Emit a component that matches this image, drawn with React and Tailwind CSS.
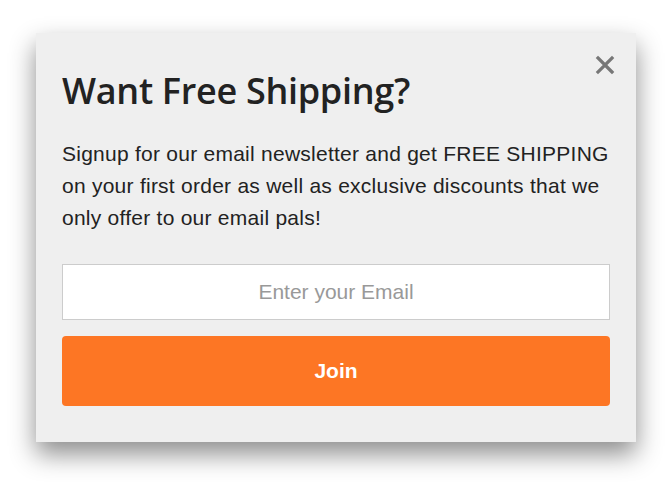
export default function App() {
  return (
    <div className="w-[672px] h-[482px] bg-white pt-[33px] pl-[36px]">
      <div className="relative w-[600px] h-[409px] bg-[#efefef] px-[26px] pt-[35px] shadow-[0_12px_24px_rgba(0,0,0,0.45)]">
        <button className="absolute right-[21px] top-[22px] text-[#777]">
          <svg width="20" height="20" viewBox="0 0 20 20" fill="none" stroke="currentColor" strokeWidth="3.2" strokeLinecap="square">
            <path d="M3 3L17 17M17 3L3 17" />
          </svg>
        </button>
        <h1 className="font-['Open_Sans',sans-serif] font-semibold text-[36px] leading-[46px] text-[#222] tracking-[-0.3px]">
          Want Free Shipping?
        </h1>
        <p className="mt-[24px] font-['Liberation_Sans',Arial,sans-serif] text-[21px] tracking-[0.25px] leading-[32px] text-[#222]">
          Signup for our email newsletter and get FREE SHIPPING on your first order as well as exclusive discounts that we only offer to our email pals!
        </p>
        <input
          type="text"
          placeholder="Enter your Email"
          className="mt-[30px] block w-full h-[56px] bg-white border border-[#ccc] text-center font-['Liberation_Sans',Arial,sans-serif] text-[21px] placeholder:text-[#999] outline-none"
        />
        <button className="mt-[16px] block w-full h-[70px] rounded-[4px] bg-[#fd7624] text-white font-['Liberation_Sans',Arial,sans-serif] font-bold text-[21px]">
          Join
        </button>
      </div>
    </div>
  );
}
